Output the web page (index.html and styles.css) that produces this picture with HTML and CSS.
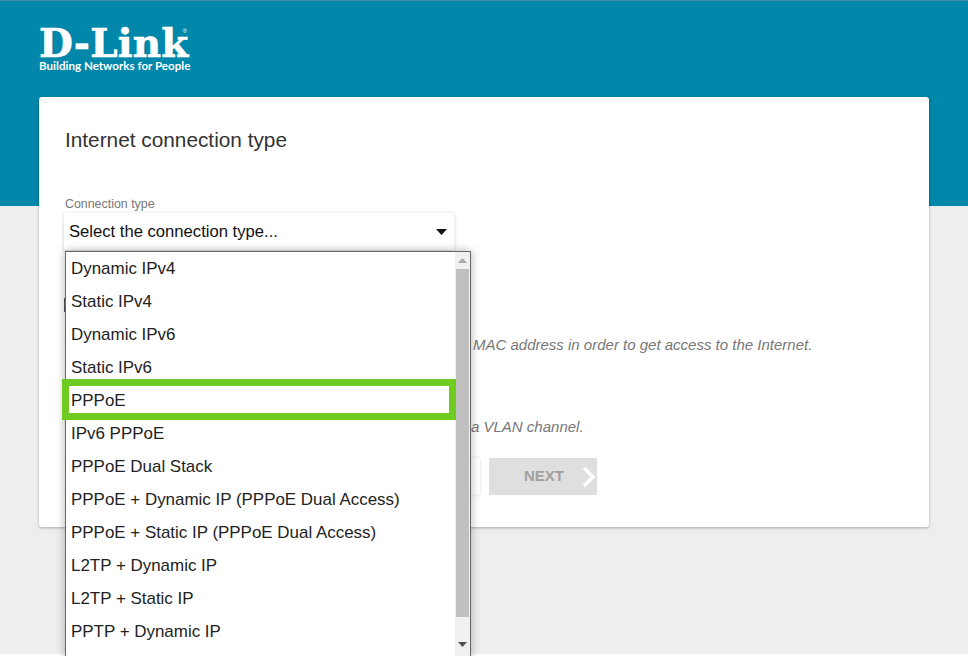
FILE: index.html
```html
<!DOCTYPE html>
<html lang="en">
<head>
  <title>Internet connection type</title>
  <meta charset="utf-8" />
  <link rel="stylesheet" href="styles.css">
</head>
<body>

  <div class="page">

    <div class="hero">
      <div class="logo">
        <div class="logo-name">D-Link<sup class="logo-reg">®</sup></div>
        <div class="logo-tag">Building Networks for People</div>
      </div>
    </div>

    <div class="card">
      <h1 class="card-title">Internet connection type</h1>

      <div class="field">
        <label class="field-label">Connection type</label>
        <div class="select-box">
          <span>Select the connection type...</span>
          <svg class="select-arrow" width="11" height="6" viewBox="0 0 11 6"><path d="M0 0h11L5.500 6z" fill="#111"/></svg>
        </div>

        <!-- open list, lies over the rest of the form -->
        <div class="dropdown">
          <ul class="options">
            <li>Dynamic IPv4</li>
            <li>Static IPv4</li>
            <li>Dynamic IPv6</li>
            <li>Static IPv6</li>
            <li class="marked">PPPoE</li>
            <li>IPv6 PPPoE</li>
            <li>PPPoE Dual Stack</li>
            <li>PPPoE + Dynamic IP (PPPoE Dual Access)</li>
            <li>PPPoE + Static IP (PPPoE Dual Access)</li>
            <li>L2TP + Dynamic IP</li>
            <li>L2TP + Static IP</li>
            <li>PPTP + Dynamic IP</li>
          </ul>
          <div class="scrollbar">
            <svg class="scroll-arrow" width="9" height="5" viewBox="0 0 9 5"><path d="M0 5h9L4.500 0z" fill="#a8a8a8"/></svg>
            <div class="scroll-thumb"></div>
            <svg class="scroll-arrow" width="9" height="5" viewBox="0 0 9 5"><path d="M0 0h9L4.500 5z" fill="#505050"/></svg>
          </div>
        </div>
      </div>

      <div class="check-row"><span class="checkbox"></span></div>
      <p class="hint hint-mac">MAC address in order to get access to the Internet.</p>
      <p class="hint hint-vlan">a VLAN channel.</p>

      <div class="buttons">
        <button class="btn btn-back"></button>
        <button class="btn btn-next">NEXT
          <svg class="btn-chevron" width="14" height="22" viewBox="0 0 14 22"><path d="M2 2l9 9-9 9" fill="none" stroke="#fff" stroke-width="3.500"/></svg>
        </button>
      </div>
    </div>

  </div>

</body>
</html>
```

FILE: styles.css
```css
html, body {
  margin: 0;
  height: 656px;
  overflow: hidden;
  background: #fff;
}

body {
  font-family: "Liberation Sans", Arial, sans-serif;
}

.page {
  height: 654px;
  background: #eeeeee;
}

.hero {
  height: 180px;
  padding: 25px 39px 0;
  background: #0087a9;
  border-top: 1px solid #4b8ba3;
}

.logo {
  width: 152px;
  color: #fff;
}

.logo-name {
  font-family: "DejaVu Serif", serif;
  font-weight: bold;
  font-size: 39px;
  line-height: 34px;
  letter-spacing: 0.2px;
  white-space: nowrap;
  -webkit-text-stroke: 0.6px #fff;
}

.logo-reg {
  font-family: "Liberation Sans", sans-serif;
  font-weight: normal;
  font-size: 6px;
  line-height: 0;
  vertical-align: 24px;
  margin-left: -6px;
  letter-spacing: 0;
  -webkit-text-stroke: 0;
}

.logo-tag {
  font-family: Lato, sans-serif;
  font-weight: 700;
  font-size: 11.600px;
  line-height: 11px;
  white-space: nowrap;
}

.card {
  width: 840px;
  height: 430px;
  margin: -109px 0 0 39px;
  padding: 0 25px;
  position: relative;
  background: #fff;
  border-radius: 3px;
  box-shadow: 0 1px 3px rgba(0, 0, 0, 0.3);
}

.card-title {
  margin: 0;
  padding: 31px 0 0 1px;
  font-size: 20.8px;
  font-weight: normal;
  line-height: 24px;
  color: #333;
}

.field {
  position: relative;
  width: 390px;
  margin-top: 45px;
}

.field-label {
  display: block;
  margin-left: 1px;
  font-size: 12.4px;
  line-height: 14px;
  color: #777;
}

.select-box {
  display: flex;
  justify-content: space-between;
  align-items: center;
  height: 37px;
  margin-top: 2px;
  padding: 0 7px 0 5px;
  font-size: 16.640px;
  color: #111;
  background: #fff;
  box-shadow: 0 1px 4px rgba(0, 0, 0, 0.2);
}

.dropdown {
  position: absolute;
  top: 54px;
  left: 1px;
  z-index: 2;
  display: flex;
  width: 404px;
  height: 405px;
  background: #fff;
  border: 1px solid #666;
  box-shadow: 0 0 9px rgba(0, 0, 0, 0.3);
}

.options {
  flex: 1;
  margin: 0;
  padding: 1px 0 0;
  list-style: none;
}

.options li {
  position: relative;
  height: 33px;
  padding-left: 5px;
  font-size: 16.950px;
  line-height: 32px;
  color: #222;
  white-space: nowrap;
}

.options li.marked::after {
  content: "";
  position: absolute;
  top: -6px;
  left: -4px;
  width: 380px;
  height: 27px;
  border: 7px solid #6fcb1f;
}

.scrollbar {
  display: flex;
  flex-direction: column;
  align-items: center;
  width: 15px;
  background: #f0f0f0;
}

.scroll-arrow {
  flex: none;
  margin: 6px 0;
}

.scroll-thumb {
  flex: none;
  width: 13px;
  height: 348px;
  background: #c0c0c0;
}

.scrollbar .scroll-arrow:last-child {
  margin-top: 25px;
}

.check-row {
  position: absolute;
  top: 201px;
  left: 25px;
}

.checkbox {
  display: block;
  width: 14px;
  height: 14px;
  border: 1px solid #555;
  box-sizing: border-box;
}

.hint {
  margin: 0;
  padding-left: 409px;
  font-size: 15px;
  font-style: italic;
  line-height: 18px;
  color: #777;
}

.hint-mac {
  margin-top: 86px;
}

.hint-vlan {
  margin-top: 64px;
  padding-left: 407px;
}

.buttons {
  display: flex;
  gap: 9px;
  margin: 22px 0 0 316px;
}

.btn {
  display: flex;
  align-items: center;
  justify-content: center;
  height: 37px;
  padding: 0;
  border: 0;
  font-family: inherit;
  font-size: 15px;
  font-weight: bold;
}

.btn-back {
  width: 100px;
  background: #fff;
  border-radius: 3px;
  box-shadow: 0 0 3px rgba(0, 0, 0, 0.15);
}

.btn-next {
  position: relative;
  width: 108px;
  padding: 0 0 2px 2px;
  background: #dfdfdf;
  color: #a0a0a0;
}

.btn-chevron {
  position: absolute;
  right: 1px;
  top: 8px;
}
```
